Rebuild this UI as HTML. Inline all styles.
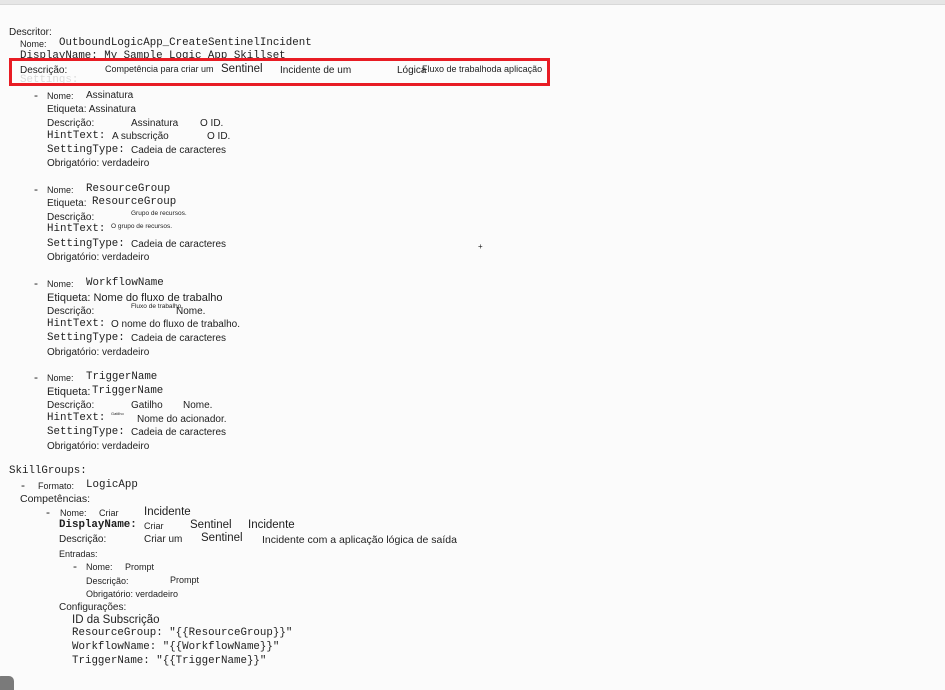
<!DOCTYPE html>
<html><head><meta charset="utf-8"><style>
html,body{margin:0;padding:0;width:945px;height:690px;overflow:hidden;background:#fbfbfb;}
body{position:relative;font-family:"Liberation Sans",sans-serif;color:#1e1e1e;}
#w{position:absolute;left:0;top:3px;width:945px;height:690px;}
.t{position:absolute;white-space:nowrap;line-height:1;font-size:10px;}
.m{font-family:"Liberation Mono",monospace;font-size:10.8px;}
.s{font-size:9px;}
.xs{font-size:6.5px;}
.l{font-size:11.5px;}
.d{font-size:12px;}
#top{position:absolute;left:0;top:0;width:945px;height:4px;background:#e6e6e6;border-bottom:1px solid #d8d8d8;}
#box{position:absolute;left:9px;top:55px;width:535px;height:22px;border:3px solid #e81c24;background:rgba(251,251,251,0.85);}
#blob{position:absolute;left:-4px;top:676px;width:18px;height:20px;border-radius:5px;background:#7a7a7a;}
</style></head><body>
<div id="top"></div>
<div id="w">
<div class="t" style="left:9px;top:25px">Descritor:</div>
<div class="t s" style="left:20px;top:37px">Nome:</div>
<div class="t m" style="left:59px;top:35px">OutboundLogicApp_CreateSentinelIncident</div>
<div class="t m" style="left:20px;top:48px">DisplayName: My Sample Logic App Skillset</div>
<div class="t m" style="left:20px;top:72px">Settings:</div>
<div id="box"></div>
<div class="t" style="left:20px;top:63px">Descrição:</div>
<div class="t s" style="left:105px;top:62px">Competência para criar um</div>
<div class="t l" style="left:221px;top:61px">Sentinel</div>
<div class="t" style="left:280px;top:63px">Incidente de um</div>
<div class="t" style="left:397px;top:63px">Lógica</div>
<div class="t s" style="left:422px;top:62px">Fluxo de trabalhoda aplicação</div>

<div class="t d" style="left:34px;top:86px">-</div>
<div class="t s" style="left:47px;top:89px">Nome:</div>
<div class="t" style="left:86px;top:88px">Assinatura</div>
<div class="t" style="left:47px;top:102px">Etiqueta: Assinatura</div>
<div class="t" style="left:47px;top:116px">Descrição:</div>
<div class="t" style="left:131px;top:116px">Assinatura</div>
<div class="t" style="left:200px;top:116px">O ID.</div>
<div class="t m" style="left:47px;top:128px">HintText:</div>
<div class="t" style="left:112px;top:129px">A subscrição</div>
<div class="t" style="left:207px;top:129px">O ID.</div>
<div class="t m" style="left:47px;top:142px">SettingType:</div>
<div class="t" style="left:131px;top:143px">Cadeia de caracteres</div>
<div class="t" style="left:47px;top:156px">Obrigatório: verdadeiro</div>

<div class="t d" style="left:34px;top:180px">-</div>
<div class="t s" style="left:47px;top:183px">Nome:</div>
<div class="t m" style="left:86px;top:181px">ResourceGroup</div>
<div class="t" style="left:47px;top:196px">Etiqueta:</div>
<div class="t m" style="left:92px;top:194px">ResourceGroup</div>
<div class="t" style="left:47px;top:210px">Descrição:</div>
<div class="t xs" style="left:131px;top:208px">Grupo de recursos.</div>
<div class="t m" style="left:47px;top:221px">HintText:</div>
<div class="t xs" style="left:111px;top:221px">O grupo de recursos.</div>
<div class="t m" style="left:47px;top:236px">SettingType:</div>
<div class="t" style="left:131px;top:237px">Cadeia de caracteres</div>
<div class="t" style="left:47px;top:250px">Obrigatório: verdadeiro</div>
<div class="t" style="left:478px;top:240px;font-size:8px">+</div>

<div class="t d" style="left:34px;top:274px">-</div>
<div class="t s" style="left:47px;top:277px">Nome:</div>
<div class="t m" style="left:86px;top:275px">WorkflowName</div>
<div class="t" style="left:47px;top:290px;font-size:11px">Etiqueta: Nome do fluxo de trabalho</div>
<div class="t" style="left:47px;top:304px">Descrição:</div>
<div class="t xs" style="left:131px;top:301px">Fluxo de trabalho</div>
<div class="t" style="left:176px;top:304px">Nome.</div>
<div class="t m" style="left:47px;top:316px">HintText:</div>
<div class="t" style="left:111px;top:317px">O nome do fluxo de trabalho.</div>
<div class="t m" style="left:47px;top:330px">SettingType:</div>
<div class="t" style="left:131px;top:331px">Cadeia de caracteres</div>
<div class="t" style="left:47px;top:345px">Obrigatório: verdadeiro</div>

<div class="t d" style="left:34px;top:368px">-</div>
<div class="t s" style="left:47px;top:371px">Nome:</div>
<div class="t m" style="left:86px;top:369px">TriggerName</div>
<div class="t" style="left:47px;top:384px;font-size:11px">Etiqueta:</div>
<div class="t m" style="left:92px;top:383px">TriggerName</div>
<div class="t" style="left:47px;top:398px">Descrição:</div>
<div class="t" style="left:131px;top:398px">Gatilho</div>
<div class="t" style="left:183px;top:398px">Nome.</div>
<div class="t m" style="left:47px;top:410px">HintText:</div>
<div class="t" style="left:111px;top:409px;font-size:4px">Gatilho</div>
<div class="t" style="left:137px;top:412px">Nome do acionador.</div>
<div class="t m" style="left:47px;top:424px">SettingType:</div>
<div class="t" style="left:131px;top:425px">Cadeia de caracteres</div>
<div class="t" style="left:47px;top:439px">Obrigatório: verdadeiro</div>

<div class="t m" style="left:9px;top:463px">SkillGroups:</div>
<div class="t d" style="left:21px;top:476px">-</div>
<div class="t s" style="left:38px;top:479px">Formato:</div>
<div class="t m" style="left:86px;top:477px">LogicApp</div>
<div class="t" style="left:20px;top:491px;font-size:10.5px">Competências:</div>
<div class="t d" style="left:46px;top:503px">-</div>
<div class="t s" style="left:60px;top:506px">Nome:</div>
<div class="t s" style="left:99px;top:506px">Criar</div>
<div class="t l" style="left:144px;top:504px">Incidente</div>
<div class="t m" style="left:59px;top:517px;font-weight:bold">DisplayName:</div>
<div class="t s" style="left:144px;top:519px">Criar</div>
<div class="t l" style="left:190px;top:517px">Sentinel</div>
<div class="t l" style="left:248px;top:517px">Incidente</div>
<div class="t" style="left:59px;top:532px">Descrição:</div>
<div class="t" style="left:144px;top:532px">Criar um</div>
<div class="t l" style="left:201px;top:530px">Sentinel</div>
<div class="t" style="left:262px;top:532px;font-size:10.5px">Incidente com a aplicação lógica de saída</div>
<div class="t s" style="left:59px;top:547px">Entradas:</div>
<div class="t d" style="left:73px;top:557px">-</div>
<div class="t s" style="left:86px;top:560px">Nome:</div>
<div class="t s" style="left:125px;top:560px">Prompt</div>
<div class="t s" style="left:86px;top:574px">Descrição:</div>
<div class="t s" style="left:170px;top:573px">Prompt</div>
<div class="t s" style="left:86px;top:587px">Obrigatório: verdadeiro</div>
<div class="t" style="left:59px;top:600px">Configurações:</div>
<div class="t l" style="left:72px;top:612px">ID da Subscrição</div>
<div class="t m" style="left:72px;top:625px">ResourceGroup: "{{ResourceGroup}}"</div>
<div class="t m" style="left:72px;top:639px">WorkflowName: "{{WorkflowName}}"</div>
<div class="t m" style="left:72px;top:653px">TriggerName: "{{TriggerName}}"</div>
</div>
<div id="blob"></div>
</body></html>
